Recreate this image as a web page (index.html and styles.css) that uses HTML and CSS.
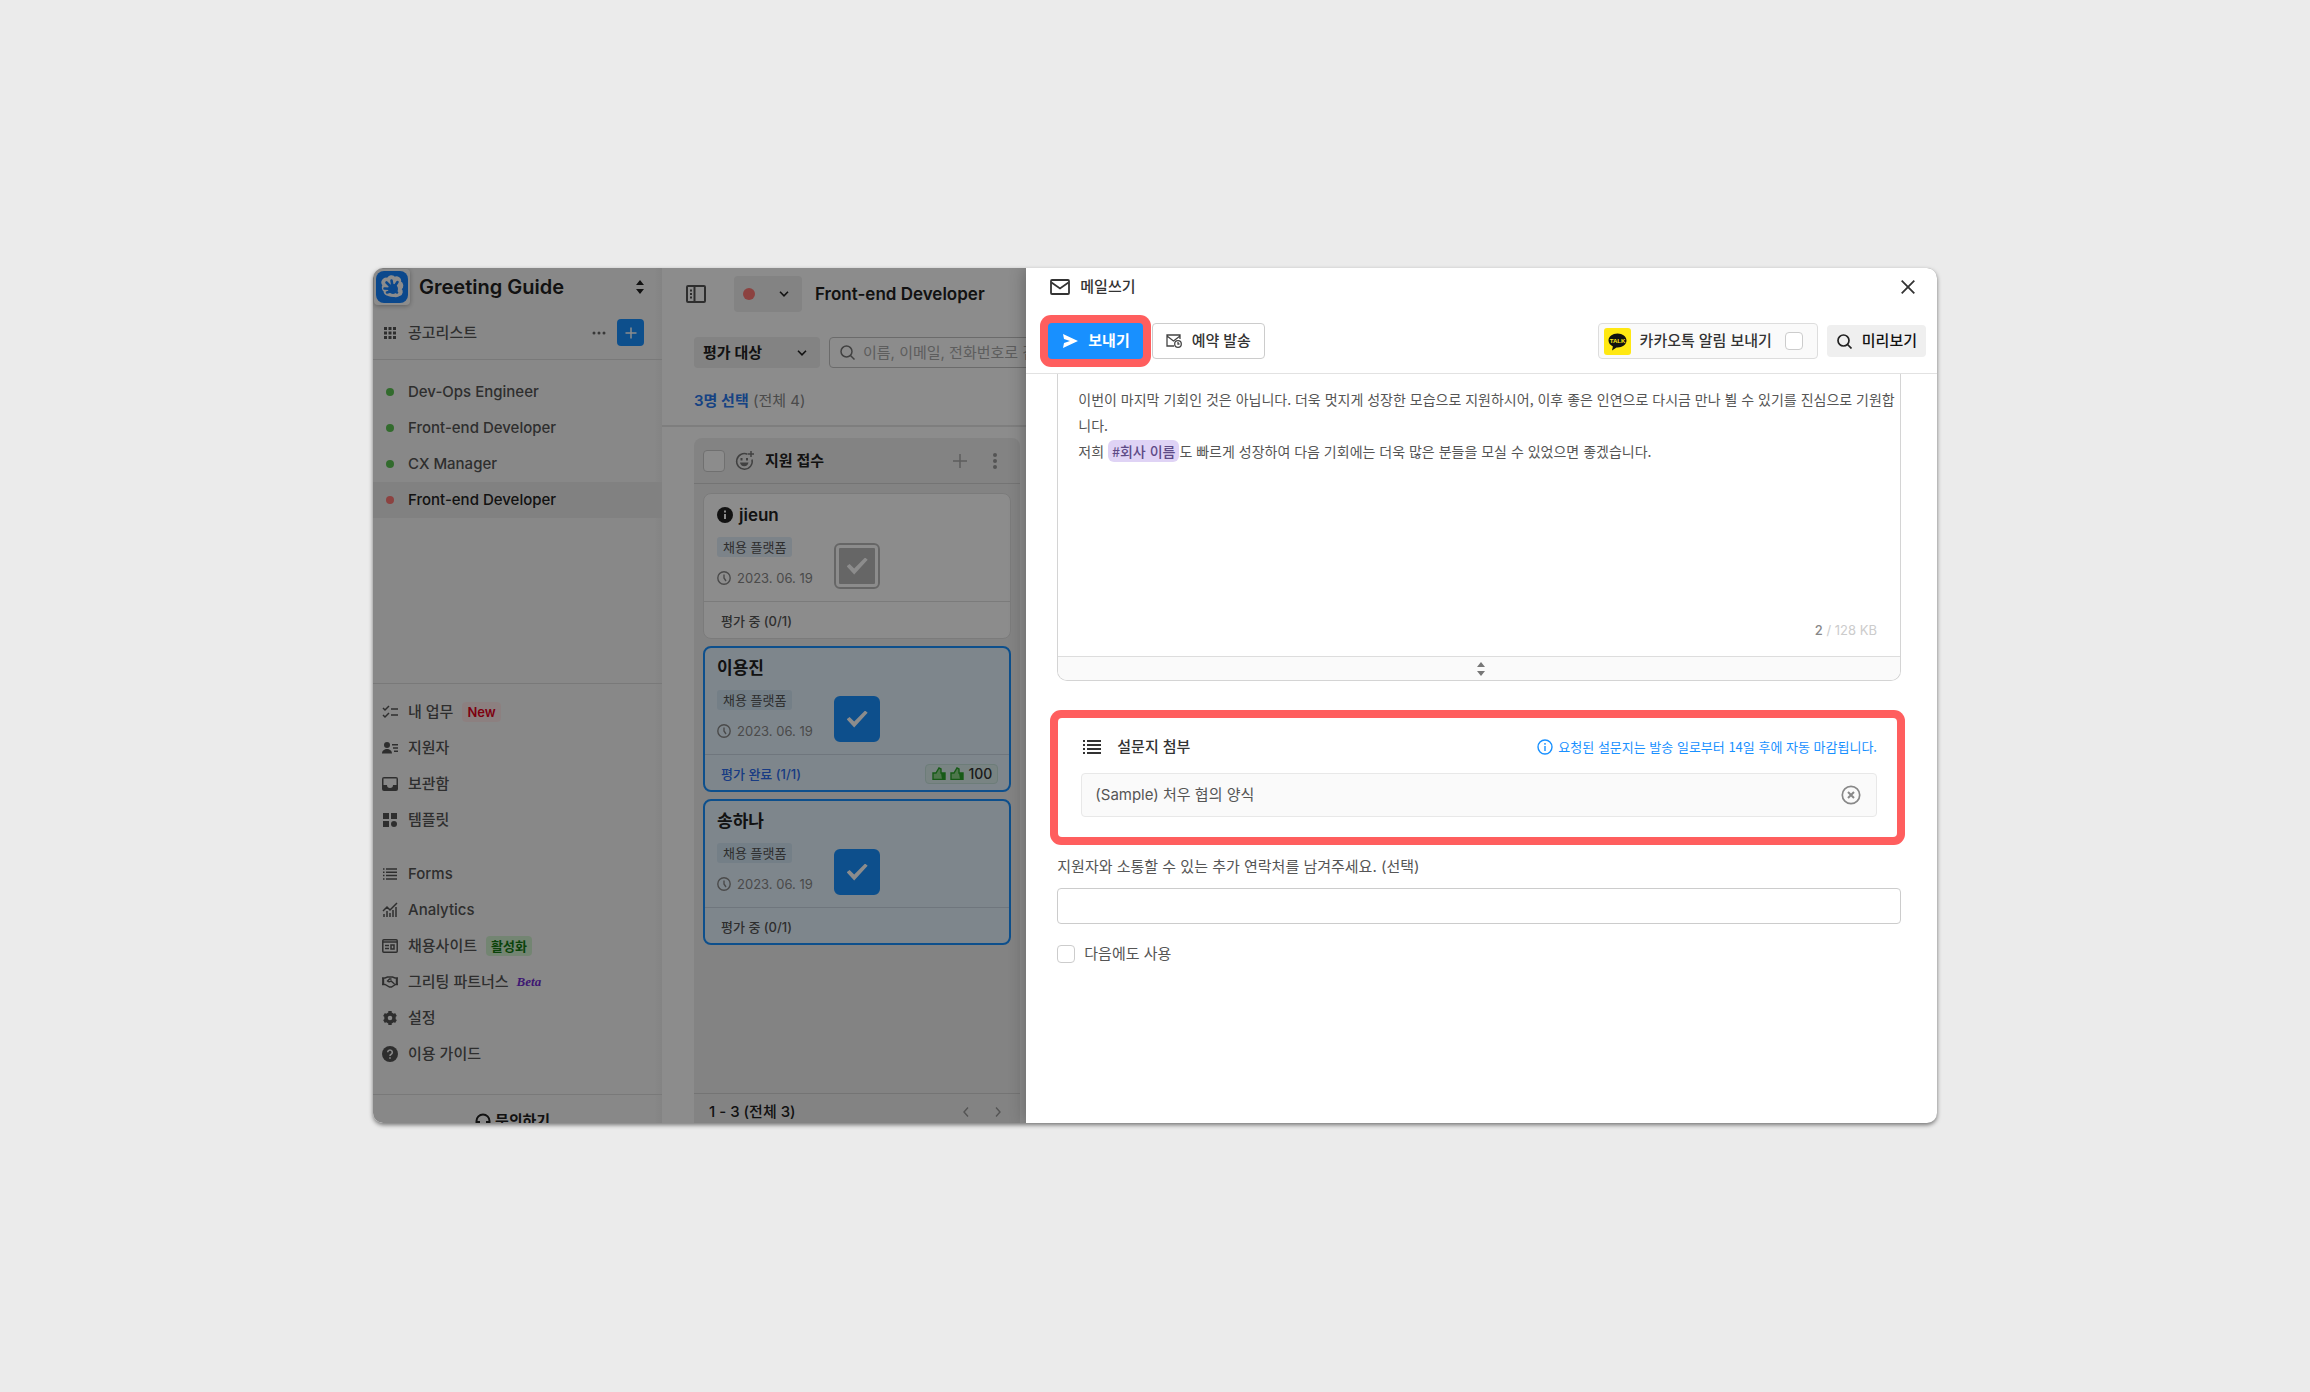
FILE: index.html
```html
<!DOCTYPE html>
<html lang="ko">
<head>
	<meta charset="UTF-8">
	<title>Greeting Guide - 메일쓰기</title>
	<link rel="stylesheet" href="styles.css">
</head>
<body>
	<div class="app">
		<aside class="sidebar">
			<div class="brand">
				<span class="logo">
					<svg width="32" height="32" viewBox="0 0 32 32"><rect width="32" height="32" rx="8" fill="#1583ff"/><path d="M12 8a3.500 3.500 0 0 1 6.500-1a3.600 3.600 0 0 1 5.500 4a4 4 0 0 1 0.500 7a3.500 3.500 0 0 1-1 6a6 6 0 0 1-5 1a12 12 0 0 1-6-1a4 4 0 0 1-4-4a4.500 4.500 0 0 1-1-6a3.800 3.800 0 0 1 4.500-6z" fill="#fff" stroke="#fff" stroke-width="2" stroke-linejoin="round"/><circle cx="17" cy="18" r="5" fill="#1583ff"/><path d="M17 18l-6.500-6.500M17 18L15.500 9.500M17 18l4.500-7M17 18l-8.500-0.500M16 20l-5 1.500M19 20l2 1.500" stroke="#1583ff" stroke-width="2.600" stroke-linecap="round"/></svg>
				</span>
				<h1>Greeting Guide</h1>
				<button class="bare" aria-label="워크스페이스 변경"><svg width="8" height="14" viewBox="0 0 8 14"><path d="M4 0l4 5H0zM4 14l4-5H0z" fill="#222"/></svg></button>
			</div>
			<div class="list-head">
				<svg class="ico" width="16" height="16" viewBox="0 0 16 16" fill="#555"><path d="M2 2h3v3H2zM6.500 2h3v3h-3zM11 2h3v3h-3zM2 6.500h3v3H2zM6.500 6.500h3v3h-3zM11 6.500h3v3h-3zM2 11h3v3H2zM6.500 11h3v3h-3zM11 11h3v3h-3z"/></svg>
				<span class="grow">공고리스트</span>
				<button class="bare" aria-label="더보기"><svg width="14" height="4" viewBox="0 0 14 4" fill="#666"><circle cx="2" cy="2" r="1.500"/><circle cx="7" cy="2" r="1.500"/><circle cx="12" cy="2" r="1.500"/></svg></button>
				<button class="add" aria-label="공고 추가"><svg width="12" height="12" viewBox="0 0 12 12"><path d="M6 0.500v11M0.500 6h11" stroke="#fff" stroke-width="1.500"/></svg></button>
			</div>
			<nav class="jobs">
				<a href="#"><i class="dot"></i>Dev-Ops Engineer</a>
				<a href="#"><i class="dot"></i>Front-end Developer</a>
				<a href="#"><i class="dot"></i>CX Manager</a>
				<a href="#" class="on"><i class="dot red"></i>Front-end Developer</a>
			</nav>
			<nav class="menu">
				<a href="#"><svg class="ico" width="16" height="16" viewBox="0 0 16 16" fill="none" stroke="#555" stroke-width="1.500"><path d="M1 4l2 2 4-4M1 11l2 2 4-4M9 5h7M9 11h7"/></svg>내 업무<span class="tag-new">New</span></a>
				<a href="#"><svg class="ico" width="16" height="16" viewBox="0 0 16 16" fill="#555"><circle cx="5" cy="5" r="3"/><path d="M0 13.500c0-3 2.500-4.500 5-4.500s5 1.500 5 4.500zM10 4h6v1.400h-6zM11 7.300h5v1.400h-5zM12 10.600h4V12h-4z"/></svg>지원자</a>
				<a href="#"><svg class="ico" width="16" height="16" viewBox="0 0 16 16"><path d="M2 1h12a2 2 0 0 1 2 2v10a2 2 0 0 1-2 2H2a2 2 0 0 1-2-2V3a2 2 0 0 1 2-2zM1.500 2.500V9H5a3 3 0 0 0 6 0h3.500V2.500z" fill="#555" fill-rule="evenodd"/></svg>보관함</a>
				<a href="#"><svg class="ico" width="16" height="16" viewBox="0 0 16 16" fill="#555"><path d="M1 1h6v6H1zM9 1h6v6H9zM1 9h6v6H1z"/><circle cx="12" cy="12" r="3"/></svg>템플릿</a>
			</nav>
			<nav class="menu second">
				<a href="#"><svg class="ico" width="16" height="16" viewBox="0 0 16 16" stroke="#555" stroke-width="1.500"><path d="M1 3h1.500M4 3h11M1 6.300h1.500M4 6.300h11M1 9.600h1.500M4 9.600h11M1 13h1.500M4 13h11"/></svg>Forms</a>
				<a href="#"><svg class="ico" width="16" height="16" viewBox="0 0 16 16" fill="none" stroke="#555" stroke-width="1.500"><path d="M1 9l4-4 3 3 7-7M2 15v-3M5 15V9M8 15v-4M11 15V8M14 15V5"/></svg>Analytics</a>
				<a href="#"><svg class="ico" width="16" height="16" viewBox="0 0 16 16" fill="none" stroke="#555" stroke-width="1.500"><rect x="0.800" y="1.800" width="14.400" height="12.400" rx="1"/><path d="M1 4h14M3 7.500h4M3 10.500h4"/><path d="M9 7h3v4H9z"/></svg>채용사이트<span class="tag-live">활성화</span></a>
				<a href="#"><svg class="ico" width="16" height="16" viewBox="0 0 16 16" fill="none" stroke="#555" stroke-width="1.400"><path d="M0 4h3l2.500-1h5L13 4h3v6.500h-2.500l-4 2.500h-2L3 10.500H0zM1.500 4v6.500M14.500 4v6.500M9.500 5h-2L5.500 7q1.500 1.500 3.500 0l3.500 3"/></svg>그리팅 파트너스<em class="beta">Beta</em></a>
				<a href="#"><svg class="ico" width="16" height="16" viewBox="0 0 16 16"><circle cx="8" cy="8" r="4" fill="none" stroke="#555" stroke-width="3.500"/><path d="M8 1v3M8 12v3M2 4.500l2.500 1.500M11.500 10l2.500 1.500M2 11.500l2.500-1.500M11.500 6l2.500-1.500" stroke="#555" stroke-width="3.400"/></svg>설정</a>
				<a href="#"><svg class="ico" width="16" height="16" viewBox="0 0 16 16"><circle cx="8" cy="8" r="8" fill="#555"/><path d="M5.700 6.300a2.300 2.300 0 1 1 3.500 2C8.300 8.800 8 9.200 8 10M8 11.300v1.500" fill="none" stroke="#f7f7f7" stroke-width="1.600"/></svg>이용 가이드</a>
			</nav>
			<a href="#" class="contact"><svg width="16" height="16" viewBox="0 0 16 16" fill="none" stroke="#222" stroke-width="2"><path d="M1.500 11V8a6.500 6.500 0 0 1 13 0v3"/><path d="M3.500 8v6M12.500 8v6" stroke-width="3"/></svg>문의하기</a>
		</aside>

		<main class="board">
			<header class="board-head">
				<button class="bare" aria-label="사이드바 접기"><svg width="20" height="18" viewBox="0 0 20 18" fill="none" stroke="#555" stroke-width="2"><rect x="1" y="1" width="18" height="16" rx="1"/><path d="M8.500 1v16M4 5.500h2M4 9h2M4 12.500h2"/></svg></button>
				<button class="status" aria-label="공고 상태"><i class="dot red big"></i><svg width="10" height="6" viewBox="0 0 10 6"><path d="M1 0.800l4 4 4-4" fill="none" stroke="#222" stroke-width="1.600"/></svg></button>
				<h2>Front-end Developer</h2>
			</header>
			<div class="filters">
				<div class="pick">
					<select aria-label="평가 대상"><option>평가 대상</option></select>
					<svg width="10" height="6" viewBox="0 0 10 6"><path d="M1 0.800l4 4 4-4" fill="none" stroke="#222" stroke-width="1.600"/></svg>
				</div>
				<div class="search">
					<svg width="15" height="15" viewBox="0 0 15 15" fill="none" stroke="#777" stroke-width="1.500"><circle cx="6.500" cy="6.500" r="5.500"/><path d="M10.500 10.500l4 4"/></svg>
					<input type="text" aria-label="지원자 검색" placeholder="이름, 이메일, 전화번호로 검색">
				</div>
			</div>
			<p class="picked"><b>3명 선택</b> (전체 4)</p>
			<section class="column">
				<header class="column-head">
					<input type="checkbox" class="check large" aria-label="전체 선택">
					<svg width="20" height="20" viewBox="0 0 20 20" fill="none" stroke="#777" stroke-width="1.500"><path d="M12.500 3.200A7.800 7.800 0 1 0 17 8.500M16 0v6M13 3h6"/><path d="M5 11.500h8.500a4.300 4.300 0 0 1-8.500 0z" fill="#777" stroke="none"/><path d="M6.500 7v2.500M12 7v2.500" stroke-width="2"/></svg>
					<h3>지원 접수</h3>
					<button class="bare" aria-label="지원자 추가"><svg width="14" height="14" viewBox="0 0 14 14"><path d="M7 0v14M0 7h14" stroke="#aaa" stroke-width="1.500"/></svg></button>
					<button class="bare" aria-label="메뉴"><svg width="4" height="16" viewBox="0 0 4 16" fill="#999"><circle cx="2" cy="2" r="2"/><circle cx="2" cy="8" r="2"/><circle cx="2" cy="14" r="2"/></svg></button>
				</header>
				<div class="cards">
					<article class="card">
						<div class="card-main">
							<h4><svg width="16" height="16" viewBox="0 0 16 16"><circle cx="8" cy="8" r="8" fill="#222"/><path d="M8 3.500v2M8 7v5" stroke="#fff" stroke-width="2"/></svg>jieun</h4>
							<span class="platform">채용 플랫폼</span>
							<time><svg width="14" height="14" viewBox="0 0 14 14" fill="none" stroke="#888" stroke-width="1.400"><circle cx="7" cy="7" r="6.200"/><path d="M7 3.500V7l2 3"/></svg>2023. 06. 19</time>
						</div>
						<div class="card-foot">평가 중 (0/1)</div>
						<input type="checkbox" class="pick-card" aria-label="jieun 선택">
					</article>
					<article class="card selected">
						<div class="card-main">
							<h4>이용진</h4>
							<span class="platform">채용 플랫폼</span>
							<time><svg width="14" height="14" viewBox="0 0 14 14" fill="none" stroke="#888" stroke-width="1.400"><circle cx="7" cy="7" r="6.200"/><path d="M7 3.500V7l2 3"/></svg>2023. 06. 19</time>
						</div>
						<div class="card-foot"><span class="done">평가 완료 (1/1)</span>
							<span class="score">
								<svg width="14" height="13" viewBox="0 0 14 13"><path d="M1 6h3l3-5 2 1v4h4v6.500H1z" fill="#8fd98a" stroke="#2ba52b" stroke-width="1.400"/><path d="M9 6h4v6.500h-3z" fill="#2ba52b"/></svg>
								<svg width="14" height="13" viewBox="0 0 14 13"><path d="M1 6h3l3-5 2 1v4h4v6.500H1z" fill="#8fd98a" stroke="#2ba52b" stroke-width="1.400"/><path d="M9 6h4v6.500h-3z" fill="#2ba52b"/></svg>
								100
							</span>
						</div>
						<input type="checkbox" class="pick-card" aria-label="이용진 선택" checked>
					</article>
					<article class="card selected">
						<div class="card-main">
							<h4>송하나</h4>
							<span class="platform">채용 플랫폼</span>
							<time><svg width="14" height="14" viewBox="0 0 14 14" fill="none" stroke="#888" stroke-width="1.400"><circle cx="7" cy="7" r="6.200"/><path d="M7 3.500V7l2 3"/></svg>2023. 06. 19</time>
						</div>
						<div class="card-foot">평가 중 (0/1)</div>
						<input type="checkbox" class="pick-card" aria-label="송하나 선택" checked>
					</article>
				</div>
				<footer class="pager">
					<span class="grow">1 - 3 (전체 3)</span>
					<button class="bare" aria-label="이전"><svg width="6" height="10" viewBox="0 0 6 10"><path d="M5 0.500L1 5l4 4.500" fill="none" stroke="#999" stroke-width="1.400"/></svg></button>
					<button class="bare" aria-label="다음"><svg width="6" height="10" viewBox="0 0 6 10"><path d="M1 0.500L5 5 1 9.500" fill="none" stroke="#999" stroke-width="1.400"/></svg></button>
				</footer>
			</section>
		</main>
		<div class="dim"></div>

		<section class="drawer">
			<header class="drawer-head">
				<svg width="20" height="16" viewBox="0 0 20 16" fill="none" stroke="#333" stroke-width="1.800"><rect x="1" y="1" width="18" height="14" rx="1"/><path d="M1.500 3.500L10 9.500l8.500-6"/></svg>
				<h2 class="grow">메일쓰기</h2>
				<button class="bare" aria-label="닫기"><svg width="14" height="14" viewBox="0 0 14 14"><path d="M0.700 0.700l12.600 12.600M13.300 0.700L0.700 13.300" stroke="#333" stroke-width="1.800"/></svg></button>
			</header>
			<div class="toolbar">
				<button class="btn send"><svg width="15" height="14" viewBox="0 0 15 14"><path d="M0 0l15 7L0 14l1-5 6-2-6-2z" fill="#fff"/></svg>보내기</button>
				<button class="btn"><svg width="16" height="14" viewBox="0 0 16 14" fill="none" stroke="#444" stroke-width="1.300"><path d="M14 5V1H1v11h7M1 2l6.500 5L14 2"/><circle cx="12" cy="10" r="3.300"/><path d="M12 8v2h1.500"/></svg>예약 발송</button>
				<label class="kakao">
					<svg width="27" height="27" viewBox="0 0 27 27"><rect width="27" height="27" rx="3" fill="#ffe812"/><path d="M13.500 5.500c5 0 9 3 9 7s-4 7-9 7l-1-.1-4.500 3 .9-4C6.300 17.200 4.500 15 4.500 12.500c0-4 4-7 9-7z" fill="#111"/><text x="13.500" y="15" text-anchor="middle" class="talk">TALK</text></svg>
					카카오톡 알림 보내기
					<input type="checkbox" class="check">
				</label>
				<button class="btn preview"><svg width="15" height="15" viewBox="0 0 15 15" fill="none" stroke="#222" stroke-width="1.700"><circle cx="6.500" cy="6.500" r="5.500"/><path d="M10.500 10.500l4 4"/></svg>미리보기</button>
			</div>
			<div class="drawer-body">
				<div class="editor">
					<div class="editor-text">
						<p>이번이 마지막 기회인 것은 아닙니다. 더욱 멋지게 성장한 모습으로 지원하시어, 이후 좋은 인연으로 다시금 만나 뵐 수 있기를 진심으로 기원합니다.</p>
						<p>저희 <span class="var">#회사 이름</span>도 빠르게 성장하여 다음 기회에는 더욱 많은 분들을 모실 수 있었으면 좋겠습니다.</p>
					</div>
					<div class="size"><b>2</b> / 128 KB</div>
					<button class="resize" aria-label="크기 조절"><svg width="8" height="14" viewBox="0 0 8 14"><path d="M4 0l4 5H0zM4 14l4-5H0z" fill="#777"/></svg></button>
				</div>
				<section class="survey">
					<div class="survey-head">
						<svg width="18" height="14" viewBox="0 0 18 14" stroke="#333" stroke-width="2"><path d="M0 1h2M4 1h14M0 5h2M4 5h14M0 9h2M4 9h14M0 13h2M4 13h14"/></svg>
						<h3 class="grow">설문지 첨부</h3>
						<p class="note"><svg width="16" height="16" viewBox="0 0 16 16" fill="none" stroke="#1890ff" stroke-width="1.400"><circle cx="8" cy="8" r="7"/><path d="M8 4v1.700M8 7v5"/></svg>요청된 설문지는 발송 일로부터 14일 후에 자동 마감됩니다.</p>
					</div>
					<div class="form-name">
						<span class="grow">(Sample) 처우 협의 양식</span>
						<button class="bare" aria-label="설문지 삭제"><svg width="20" height="20" viewBox="0 0 20 20" fill="none" stroke="#888" stroke-width="1.700"><circle cx="10" cy="10" r="8.700"/><path d="M7 7l6 6M13 7l-6 6" stroke-width="2"/></svg></button>
					</div>
				</section>
				<label class="extra" for="extra">지원자와 소통할 수 있는 추가 연락처를 남겨주세요. (선택)</label>
				<input type="text" id="extra" class="extra-input">
				<label class="reuse"><input type="checkbox" class="check">다음에도 사용</label>
			</div>
		</section>
	</div>
</body>
</html>
```
FILE: styles.css
```css
*{margin:0;padding:0;box-sizing:border-box;}
body{
	display:flex;
	height:100vh;
	padding:268px 373px 269px;
	background:#ebebeb;
	font:500 15px/20px Inter,"Noto Sans CJK KR",sans-serif;
	color:#555;
}
a{color:inherit;text-decoration:none;}
svg{display:block;flex:none;}
button,input,select{font:inherit;color:inherit;}
button{cursor:pointer;}
.bare{border:0;background:none;}
.grow{flex:1;}
.app{
	position:relative;
	isolation:isolate;
	flex:1;
	display:grid;
	grid-template-columns:289px 2fr 5fr;
	grid-template-rows:minmax(0,1fr);
	border-radius:10px;
	overflow:hidden;
	background:#fff;
	box-shadow:0 2px 4px rgba(0,0,0,.5);
}
/*遮罩*/
.dim{
	position:absolute;
	top:0;right:0;bottom:0;left:0;
	background:rgba(0,0,0,.45);
}

/*sidebar*/
.sidebar{
	background:linear-gradient(to left,#f0f0f0,#f8f8f8 8px);
	overflow:hidden;
}
.brand{
	display:flex;
	align-items:center;
	height:38px;
	padding:0 18px 0 1px;
}
.logo{
	padding:2px;
	border-radius:4px;
	background:#fff;
	box-shadow:0 1px 5px rgba(0,0,0,.3);
}
.brand h1{
	flex:1;
	margin-left:9px;
	font-size:20px;
	font-weight:600;
	color:#222;
}
.list-head{
	display:flex;
	align-items:center;
	height:54px;
	padding:0 18px 0 9px;
	border-bottom:1px solid #dcdcdc;
}
.ico{margin-right:10px;}
.add{
	display:grid;
	place-items:center;
	width:27px;
	height:27px;
	margin-left:11px;
	border:0;
	border-radius:4px;
	background:#1890ff;
}
.jobs{
	height:324px;
	padding-top:14px;
	border-bottom:1px solid #dcdcdc;
}
.jobs a,.menu a{
	display:flex;
	align-items:center;
	height:36px;
	padding-left:9px;
}
.jobs a{padding-left:13px;}
.jobs .on{background:#ebebeb;color:#222;}
.dot{
	width:8px;
	height:8px;
	margin-right:14px;
	border-radius:50%;
	background:#5cc352;
}
.dot.red{background:#ff7875;}
.dot.big{width:12px;height:12px;margin:0;}
.menu{padding-top:10px;}
.menu.second{
	height:257px;
	padding-top:18px;
	border-bottom:1px solid #dcdcdc;
}
.tag-new,.tag-live{
	margin-left:9px;
	padding:0 5px;
	border-radius:4px;
	background:#ffeaea;
	font-size:13px;
	font-weight:600;
	color:#e5001c;
}
.tag-live{background:#d2f3cf;color:#137a13;}
.beta{
	margin-left:8px;
	font:italic bold 13px/20px "Liberation Serif",serif;
	color:#722ed1;
}
.contact{
	display:flex;
	justify-content:center;
	align-items:center;
	gap:4px;
	height:52px;
	padding-right:10px;
	font-weight:600;
	color:#222;
}

/*board*/
.board{
	display:flex;
	flex-direction:column;
	overflow:hidden;
}
.board-head{
	display:flex;
	align-items:center;
	height:52px;
	padding-left:24px;
}
.status{
	display:flex;
	align-items:center;
	justify-content:space-between;
	width:68px;
	height:36px;
	margin:0 13px 0 28px;
	padding:0 13px 0 9px;
	border:0;
	border-radius:4px;
	background:#eee;
}
.board-head h2{
	font-size:17px;
	font-weight:600;
	white-space:nowrap;
	color:#222;
}
.filters{
	display:flex;
	gap:9px;
	padding:17px 0 0 32px;
}
.pick{
	display:flex;
	align-items:center;
	flex:none;
	width:126px;
	height:31px;
	padding:0 13px 0 9px;
	border-radius:4px;
	background:#eee;
}
.pick select{
	flex:1;
	appearance:none;
	border:0;
	background:none;
	font-weight:600;
	color:#222;
}
.search{
	display:flex;
	align-items:center;
	flex:none;
	gap:8px;
	width:300px;
	height:31px;
	padding:0 10px;
	border:1px solid #c4c4c4;
	border-radius:4px;
}
.search input{
	flex:1;
	border:0;
	background:none;
	font-weight:400;
}
.search input::placeholder{color:#aaa;}
.picked{
	height:59px;
	padding:23px 0 0 32px;
	border-bottom:2px solid #e6e6e6;
	font-weight:400;
	color:#888;
}
.picked b{font-weight:600;color:#2878ee;}
.column{
	flex:1;
	display:flex;
	flex-direction:column;
	min-height:0;
	margin:11px 6px 0 32px;
	border-radius:8px 8px 0 0;
	background:#efefef;
}
.column-head{
	display:flex;
	align-items:center;
	height:46px;
	padding:0 23px 0 9px;
	border-bottom:1px solid #d4d4d4;
}
.column-head h3{
	flex:1;
	margin-left:10px;
	font-size:15px;
	font-weight:600;
	color:#222;
}
.column-head .bare + .bare{margin-left:26px;}
.check{
	flex:none;
	appearance:none;
	width:18px;
	height:18px;
	border:1px solid #ccc;
	border-radius:4px;
	background:#fff;
}
.check.large{width:22px;height:22px;margin-right:10px;}
.cards{
	flex:1;
	display:flex;
	flex-direction:column;
	gap:7px;
	padding:9px;
	overflow:hidden;
}
.card{
	position:relative;
	flex:none;
	height:146px;
	border:1px solid #e0e0e0;
	border-radius:8px;
	background:#fff;
}
.card-main{
	display:flex;
	flex-direction:column;
	align-items:flex-start;
	height:108px;
	padding:9px 13px 0;
	border-bottom:1px solid #e0e0e0;
}
.card h4{
	display:flex;
	align-items:center;
	gap:6px;
	height:24px;
	font-size:17px;
	font-weight:600;
	color:#222;
}
.platform{
	margin-top:10px;
	padding:0 6px;
	border-radius:3px;
	background:#e2eefa;
	font-size:13px;
	font-weight:400;
}
time{
	display:flex;
	align-items:center;
	gap:6px;
	margin-top:11px;
	font-size:13px;
	font-weight:400;
	color:#888;
}
.card-foot{
	display:flex;
	align-items:center;
	justify-content:space-between;
	height:37px;
	padding:0 12px 0 17px;
	font-size:13px;
}
.selected{border:2px solid #1890ff;background:#e6f4ff;}
.selected .card-main{height:107px;padding:8px 12px 0;border-color:#cbd8e4;}
.selected .card-foot{height:37px;padding:0 11px 0 16px;}
.selected .platform{background:#d3e8f6;}
.done{color:#2c6cee;}
.score{
	display:flex;
	align-items:center;
	gap:4px;
	height:20px;
	padding:0 5px 0 6px;
	border:1px solid #c6e3dd;
	border-radius:4px;
	background:#dcf0ee;
	font-size:14px;
	color:#333;
}
/*check drawn over the card*/
.pick-card{
	position:absolute;
	top:0;right:0;bottom:0;left:0;
	display:grid;
	place-items:center;
	width:46px;
	height:46px;
	margin:auto;
	appearance:none;
	border:2px solid #bbb;
	border-radius:6px;
	background:#bbb content-box;
	padding:3px;
}
.pick-card::before{
	content:"";
	width:21px;
	height:17px;
	background:#fff;
	clip-path:polygon(0 52%,14% 38%,36% 64%,88% 0,100% 13%,36% 100%);
}
.pick-card:checked{border-color:#1890ff;background:#1890ff;}
.pager{
	display:flex;
	align-items:center;
	height:30px;
	padding:7px 19px 0 15px;
	border-top:1px solid #d4d4d4;
	color:#222;
}
.pager .bare + .bare{margin-left:26px;}

/*mail drawer*/
.drawer{
	z-index:1;
	display:flex;
	flex-direction:column;
	min-width:0;
	background:#fff;
	box-shadow:0 0 16px rgba(0,0,0,.3);
}
.drawer-head{
	display:flex;
	align-items:center;
	gap:10px;
	height:38px;
	padding:0 22px 0 24px;
}
.drawer-head h2{font-size:15px;font-weight:500;color:#333;}
.toolbar{
	display:flex;
	align-items:flex-start;
	gap:9px;
	height:68px;
	padding:17px 11px 0 22px;
	border-bottom:1px solid #e2e2e2;
}
.btn{
	display:flex;
	align-items:center;
	justify-content:center;
	gap:10px;
	height:36px;
	padding:0 13px;
	border:1px solid #ccc;
	border-radius:4px;
	background:#fff;
	color:#333;
}
.btn.send{
	padding:0 13px 0 15px;
	border:0;
	background:#1890ff;
	box-shadow:0 0 0 8px #ff5e5e;
	font-weight:600;
	color:#fff;
}
.btn.preview{
	height:32px;
	margin-top:2px;
	padding:0 9px 0 10px;
	border:0;
	background:#efefef;
	color:#111;
}
.kakao{
	display:flex;
	align-items:center;
	gap:9px;
	height:36px;
	margin-left:auto;
	padding:0 14px 0 5px;
	border:1px solid #ddd;
	border-radius:4px;
	background:#fafafa;
	color:#333;
}
.kakao .check{margin-left:4px;}
.talk{font:bold 6px "Liberation Sans",sans-serif;fill:#ffe812;}
.drawer-body{
	flex:1;
	display:flex;
	flex-direction:column;
	min-height:0;
	padding:0 36px 0 31px;
	overflow:hidden;
}
.editor{
	display:flex;
	flex-direction:column;
	height:307px;
	border:1px solid #d4d4d4;
	border-top:0;
	border-radius:0 0 10px 10px;
	overflow:hidden;
}
.editor-text{
	flex:1;
	padding:12px 4px 0 20px;
	font:400 14px/26px "Noto Sans CJK KR",sans-serif;
}
.var{
	padding:1px 4px;
	border-radius:6px;
	background:#dfd3f5;
	font-weight:500;
	color:#5d4a86;
}
.size{
	padding:0 23px 16px;
	text-align:right;
	font-size:13px;
	font-weight:400;
	color:#ccc;
}
.size b{font-weight:500;color:#888;}
.resize{
	display:grid;
	place-items:center;
	height:24px;
	padding-left:4px;
	border:0;
	border-top:1px solid #ddd;
	background:#fafafa;
}
.survey{
	margin:37px 4px 0 1px;
	padding:17px 20px 20px 23px;
	border-radius:4px;
	box-shadow:0 0 0 8px #ff5e5e;
}
.survey-head{
	display:flex;
	align-items:center;
	height:24px;
	padding-left:2px;
	margin-bottom:14px;
}
.survey h3{
	margin-left:16px;
	font-size:15px;
	font-weight:500;
	color:#333;
}
.note{
	display:flex;
	align-items:center;
	gap:5px;
	font:400 13px/20px "Noto Sans CJK KR",sans-serif;
	color:#1890ff;
}
.form-name{
	display:flex;
	align-items:center;
	height:44px;
	padding:0 15px 0 13px;
	border:1px solid #e8e8e8;
	border-radius:4px;
	background:#fafafa;
	font-weight:400;
}
.extra{
	margin-top:20px;
	font-weight:400;
}
.extra-input{
	height:36px;
	margin-top:11px;
	padding:0 10px;
	border:1px solid #ccc;
	border-radius:4px;
}
.reuse{
	display:flex;
	align-items:center;
	gap:9px;
	margin-top:20px;
	font-weight:400;
}
```
